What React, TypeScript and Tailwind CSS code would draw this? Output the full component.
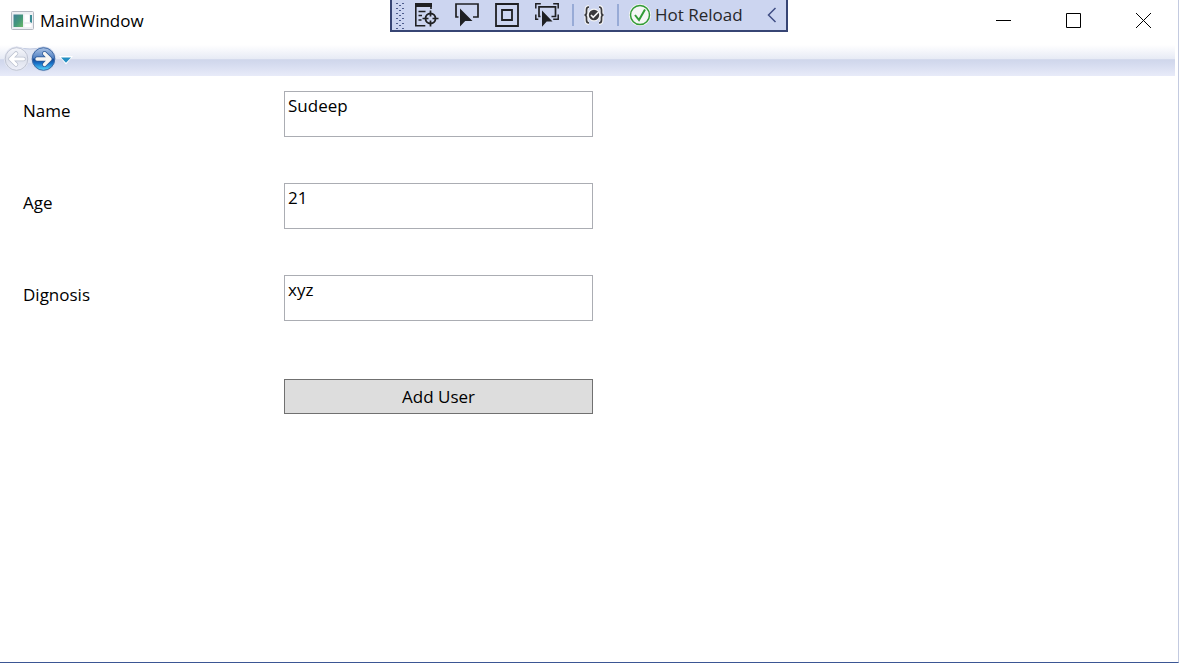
import React from "react";

const toolButton = "flex h-[30px] w-10 items-center justify-center text-[#1f2023]";

function AppIcon() {
  return (
    <svg width="23" height="20" viewBox="0 0 23 20" aria-hidden="true">
      <defs>
        <linearGradient id="pane" x1="0" y1="0" x2="1" y2="1">
          <stop offset="0" stopColor="#3f7d96" />
          <stop offset="0.55" stopColor="#44987a" />
          <stop offset="1" stopColor="#6cb968" />
        </linearGradient>
      </defs>
      <rect x="0.5" y="0.5" width="22" height="18" rx="1" fill="#eeeff3" stroke="#b3b7c0" />
      <rect x="2.500" y="3.500" width="9.500" height="12.500" fill="url(#pane)" />
      <rect x="13.500" y="3.500" width="4.500" height="7.500" fill="#fff" />
      <rect x="13.500" y="13" width="7" height="3" fill="#fff" />
      <path d="M19 4h2v8l-2-1z" fill="#3d8d96" />
    </svg>
  );
}

function WindowControls() {
  return (
    <div className="flex h-full">
      <button aria-label="Minimize" className="flex w-[70px] items-center justify-center">
        <svg width="15" height="15" stroke="#000" fill="none"><path d="M0 7.5h15" /></svg>
      </button>
      <button aria-label="Maximize" className="flex w-[70px] items-center justify-center">
        <svg width="15" height="15" stroke="#000" fill="none"><path d="M.5.5h14v14H.5z" /></svg>
      </button>
      <button aria-label="Close" className="flex w-[70px] items-center justify-center">
        <svg width="15" height="15" stroke="#000" fill="none"><path d="M0 0l15 15M15 0L0 15" /></svg>
      </button>
    </div>
  );
}

function DebugToolbar() {
  return (
    <div className="absolute inset-x-0 top-0 flex justify-center">
      <div className="flex h-8 w-[398px] items-center border-x-2 border-b-2 border-[#374574] bg-[#ccd5f0] pl-1">
        <svg width="9" height="28" className="mr-[2px]" aria-hidden="true">
          <defs>
            <pattern id="grip" y="1" width="8" height="5" patternUnits="userSpaceOnUse">
              <path d="M0 1h2v1H0zM6 1h2v1H6zM3 3h2v1H3z" fill="#4d5b8c" />
            </pattern>
          </defs>
          <rect width="8" height="28" fill="url(#grip)" />
        </svg>
        <button aria-label="Go to Live Visual Tree" className={toolButton}>
          <svg width="24" height="24" viewBox="0 0 24 24" fill="none" stroke="currentColor">
            <path d="M0 0h17v4H0z" fill="currentColor" stroke="none" />
            <path d="M.8 3v19.800h9.500M16 4v2" strokeWidth="1.600" />
            <path d="M3.500 8.500h7M3.500 12.500h3.500M3.500 17h3" strokeWidth="1.400" />
            <circle cx="15.500" cy="15.500" r="5" strokeWidth="1.900" />
            <path d="M15.500 7.500v6M15.500 17.500v6M7.500 15.500h6M17.500 15.500h6" strokeWidth="1.700" />
          </svg>
        </button>
        <button aria-label="Select Element" className={toolButton}>
          <svg width="24" height="24" viewBox="0 0 24 24">
            <path d="M3.500 14H1V1h22v13h-5" fill="none" stroke="currentColor" strokeWidth="1.700" />
            <path d="M5 5.500v18l5.200-5.500h7.300z" fill="currentColor" />
          </svg>
        </button>
        <button aria-label="Display Layout Adorners" className={toolButton}>
          <svg width="24" height="24" viewBox="0 0 24 24" fill="none" stroke="currentColor" strokeWidth="1.800">
            <path d="M1 1h22v22H1zM7 7h10v10H7z" />
          </svg>
        </button>
        <button aria-label="Track Focused Element" className={toolButton}>
          <svg width="24" height="24" viewBox="0 0 24 24" fill="none" stroke="currentColor" strokeWidth="1.500">
            <path d="M.8 5.500V.8h5M18.200.8h5v4.700M.8 11.500v4.700h2.500M23.200 11.500v4.700h-5" />
            <path d="M5.500 13.500H4V3.800h16.500v9.700h-4" strokeWidth="1.700" />
            <path d="M7 7.500v16.200l4.700-5.200h5.800z" fill="currentColor" stroke="none" />
          </svg>
        </button>
        <span className="ml-[5px] h-[22px] w-[2px] bg-[#98abd6]" />
        <button aria-label="Binding Failures" className="ml-2 flex h-[30px] w-[23px] items-center justify-center">
          <svg width="22" height="20" viewBox="0 0 22 20" fill="none">
            <path d="M6 2C4 2 3.500 3 3.500 5v2.500Q3.500 10 1.500 10q2 0 2 2.500V15c0 2 .5 3 2.500 3M16 2c2 0 2.500 1 2.500 3v2.500q0 2.500 2 2.500-2 0-2 2.500V15c0 2-.5 3-2.500 3" stroke="#f4f4f5" strokeWidth="4" />
            <circle cx="11" cy="10" r="6.500" fill="#f4f4f5" />
            <path d="M6 2C4 2 3.500 3 3.500 5v2.500Q3.500 10 1.500 10q2 0 2 2.500V15c0 2 .5 3 2.500 3M16 2c2 0 2.500 1 2.500 3v2.500q0 2.500 2 2.500-2 0-2 2.500V15c0 2-.5 3-2.500 3" stroke="#39393c" strokeWidth="1.700" />
            <circle cx="11" cy="10" r="5.200" fill="#39393c" />
            <path d="M8 10l2.200 2.300L15.500 7" stroke="#f4f4f5" strokeWidth="1.700" />
          </svg>
        </button>
        <span className="ml-3 h-[22px] w-[2px] bg-[#98abd6]" />
        <button className="ml-[10px] flex h-[30px] items-center gap-1 whitespace-nowrap text-[17px] leading-[22px] text-[#27272a]">
          <svg width="22" height="22" viewBox="0 0 22 22" fill="none" aria-hidden="true">
            <circle cx="11" cy="11" r="11" fill="#f5f6f5" />
            <circle cx="11" cy="11" r="9.500" stroke="#319b36" strokeWidth="1.500" />
            <path d="M6 11l4 5 6-10.500" stroke="#319b36" strokeWidth="2" />
          </svg>
          Hot Reload
        </button>
        <button aria-label="Collapse toolbar" className="ml-auto mr-[9px] flex h-[30px] w-[10px] items-center justify-center">
          <svg width="10" height="16" fill="none" stroke="#3f4d83" strokeWidth="1.500"><path d="M8.500 1L1.500 8l7 7" /></svg>
        </button>
      </div>
    </div>
  );
}

function NavigationBar() {
  return (
    <nav className="mr-[3px] flex h-[31px] items-start bg-[linear-gradient(to_bottom,#ffffff_0%,#e6eaf5_46%,#cfd6eb_47%,#d5dbef_62%,#e8ebf9_100%)] pl-1 pt-px">
      <div className="relative flex">
        <svg width="54" height="27" viewBox="0 0 54 27" aria-hidden="true">
          <defs>
            <linearGradient id="forward" x1="0" y1="0" x2="0" y2="1">
              <stop offset="0" stopColor="#acc3e4" />
              <stop offset="0.46" stopColor="#4f80c4" />
              <stop offset="0.5" stopColor="#144894" />
              <stop offset="0.7" stopColor="#1a72c8" />
              <stop offset="1" stopColor="#58dcff" />
            </linearGradient>
            <linearGradient id="back" x1="0" y1="0" x2="0" y2="1">
              <stop offset="0" stopColor="#f7f8fc" />
              <stop offset="0.5" stopColor="#dde1ec" />
              <stop offset="1" stopColor="#eef0f9" />
            </linearGradient>
          </defs>
          <path d="M12 1q14 4 28 0l-10 16h-8z" fill="#e0e5f2" />
          <path d="M12 1q14 4 28 0" fill="none" stroke="#bfc8e0" />
          <circle cx="12.500" cy="13" r="12.500" fill="#e3e7f2" />
          <circle cx="12.500" cy="13" r="11.300" fill="url(#back)" stroke="#bfc4d3" />
          <circle cx="39.500" cy="13" r="12.500" fill="#d0d9ec" />
          <circle cx="39.500" cy="13" r="11.300" fill="url(#forward)" stroke="#3f69a5" />
          <g fill="none" strokeLinecap="round" strokeLinejoin="round">
            <path d="M19.500 13H6.500M12 7.500L6.500 13l5.500 5.500" stroke="#bcc2d0" strokeWidth="4.500" />
            <path d="M19.500 13H6.500M12 7.500L6.500 13l5.500 5.500" stroke="#fff" strokeWidth="3" />
            <path d="M33 13h13M40.500 7.500L46 13l-5.500 5.500" stroke="#2a5795" strokeWidth="4.800" />
            <path d="M33 13h13M40.500 7.500L46 13l-5.500 5.500" stroke="#f8f6f3" strokeWidth="3.300" />
          </g>
        </svg>
        <button aria-label="Back" disabled className="absolute left-0 top-0 size-[26px] rounded-full" />
        <button aria-label="Forward" className="absolute right-0 top-0 size-[26px] rounded-full" />
      </div>
      <button aria-label="Recent pages" className="flex h-7 w-4 items-center justify-center">
        <svg width="14" height="10" viewBox="0 0 14 10">
          <path d="M0 1h14L7 9.500z" fill="#fff" />
          <path d="M2 2.500h10L7 7.800z" fill="#238ec3" />
        </svg>
      </button>
    </nav>
  );
}

function Field({ id, label, value }: { id: string; label: string; value: string }) {
  return (
    <div className="flex items-start">
      <label htmlFor={id} className="w-[261px] shrink-0 pt-2">{label}</label>
      <input
        id={id}
        type="text"
        defaultValue={value}
        className="h-[46px] w-[309px] border border-[#abadb3] bg-white pb-[18px] pl-[3px] text-black outline-none"
      />
    </div>
  );
}

export default function App() {
  return (
    <div className="relative flex min-h-screen flex-col border-b border-r border-b-[#3b5694] border-r-[#c3cae0] bg-white font-['Open_Sans',sans-serif] text-[17px] leading-[24px] text-black">
      <header className="mb-1 flex h-[41px] items-center justify-between pl-[11px]">
        <div className="flex items-center gap-[6px]">
          <AppIcon />
          <h1>MainWindow</h1>
        </div>
        <WindowControls />
      </header>
      <DebugToolbar />
      <NavigationBar />
      <form className="flex flex-col gap-[46px] px-[23px] pt-[15px]" onSubmit={(e) => e.preventDefault()}>
        <Field id="name" label="Name" value="Sudeep" />
        <Field id="age" label="Age" value="21" />
        <Field id="diagnosis" label="Dignosis" value="xyz" />
        <button
          type="submit"
          className="ml-[261px] mt-3 flex h-[35px] w-[309px] items-center justify-center border border-[#707070] bg-[#dddddd]"
        >
          Add User
        </button>
      </form>
    </div>
  );
}
